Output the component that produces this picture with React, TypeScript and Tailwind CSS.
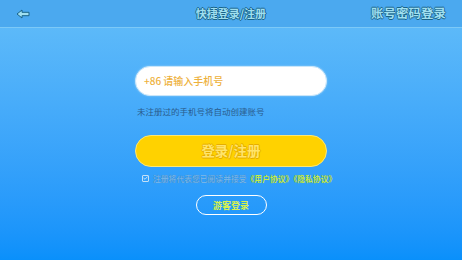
const outline =
  "[text-shadow:0.8px_0_0_#1a6488,-0.8px_0_0_#1a6488,0_0.8px_0_#1a6488,0_-0.8px_0_#1a6488]";

function BackArrow() {
  return (
    <svg width="14" height="10" viewBox="0 0 14 10" className="block">
      <path
        d="M1 5 L6 1 L6 3.3 L13 3.3 L13 6.7 L6 6.7 L6 9 Z"
        fill="#9fdff0"
        stroke="#1a6488"
        strokeWidth="1"
        strokeLinejoin="round"
      />
    </svg>
  );
}

export default function App() {
  return (
    <div
      className="w-[462px] h-[260px] flex flex-col overflow-hidden"
      style={{ fontFamily: '"Noto Sans CJK SC", "Noto Sans", sans-serif' }}
    >
      {/* Top bar */}
      <div className="h-[28px] shrink-0 bg-[#4ba9ef] border-b border-[#7cc9f7] grid grid-cols-[1fr_auto_1fr] items-center px-[16px]">
        <div>
          <BackArrow />
        </div>
        <span className={`text-[11px] font-bold leading-none text-[#9fdff0] ${outline}`}>
          快捷登录/注册
        </span>
        <div className="flex justify-end">
          <span className={`text-[12.5px] font-bold leading-none text-[#9fdff0] ${outline}`}>
            账号密码登录
          </span>
        </div>
      </div>

      {/* Body */}
      <div className="flex-1 bg-gradient-to-b from-[#5cb9f9] to-[#0990fb] flex flex-col items-center pt-[38px]">
        <div className="w-[192px] flex flex-col">
          <div className="h-[30px] rounded-full bg-white border border-[#c9e6fa] shadow-[0_0_2px_#9fd2f6] flex items-center px-[8px]">
            <span className="text-[10px] font-medium leading-none text-[#eeb13c]">+86 请输入手机号</span>
          </div>
          <div className="mt-[11px] pl-[2px] text-[8.5px] leading-none text-[#2a5c8c]">
            未注册过的手机号将自动创建账号
          </div>
          <button className="mt-[19px] h-[32px] rounded-full bg-[#ffd200] border border-[#fde774] flex items-center justify-center">
            <span className="text-[13.5px] font-bold leading-none text-[#ffe46a] [text-shadow:0.6px_0_0_#e6ad00,-0.6px_0_0_#e6ad00,0_0.6px_0_#e6ad00,0_-0.6px_0_#e6ad00]">
              登录/注册
            </span>
          </button>
          <div className="mt-[8px] flex items-center pl-[7px]">
            <span className="w-[7px] h-[7px] border border-[#c4e0f6] rounded-[1px] flex items-center justify-center">
              <svg width="5" height="4" viewBox="0 0 5 4">
                <path d="M0.5 2 L2 3.3 L4.5 0.6" fill="none" stroke="#e0f0fc" strokeWidth="0.8" />
              </svg>
            </span>
            <span className="ml-[4px] text-[7.8px] font-bold leading-none text-[#72b4ea] whitespace-nowrap [text-shadow:0_0_0.6px_#1d6aa8]">
              注册将代表您已阅读并接受
              <span className="text-[#c6ee4a]">《用户协议》《隐私协议》</span>
            </span>
          </div>
          <div className="mt-[13px] flex justify-center">
            <button className="w-[71px] h-[20px] rounded-full border-[1.5px] border-white flex items-center justify-center">
              <span className="text-[9px] font-bold leading-none text-[#d8f24a]">游客登录</span>
            </button>
          </div>
        </div>
      </div>
    </div>
  );
}
